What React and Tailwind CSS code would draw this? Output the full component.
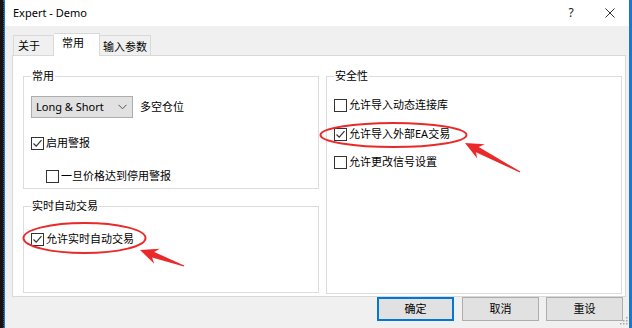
import React from "react";

const font = {
  fontFamily: '"Segoe UI", "Noto Sans", "Noto Sans CJK SC", sans-serif',
};

function Check({ checked, label, className = "" }) {
  return (
    <div className={"flex items-center h-[16px] " + className}>
      <span className="w-[13px] h-[13px] border border-[#333] bg-white flex items-center justify-center shrink-0">
        {checked && (
          <svg width="11" height="11" viewBox="0 0 11 11">
            <path d="M1.5 5.5 L4.2 8.2 L9.5 2.2" fill="none" stroke="#333" strokeWidth="1.2" />
          </svg>
        )}
      </span>
      <span className="ml-[2px] text-[11px] leading-[16px] text-black whitespace-nowrap">{label}</span>
    </div>
  );
}

function Group({ title, className = "", children }) {
  return (
    <fieldset className={"border border-[#dcdcdc] px-[7px] pb-0 m-0 " + className}>
      <legend className="px-[1px] text-[11px] leading-[16px] text-black">{title}</legend>
      {children}
    </fieldset>
  );
}

function Arrow({ tip, tail }) {
  const dx = tail[0] - tip[0];
  const dy = tail[1] - tip[1];
  const len = Math.hypot(dx, dy);
  const ux = dx / len;
  const uy = dy / len;
  const px = -uy;
  const py = ux;
  const at = (d, w) => [tip[0] + ux * d + px * w, tip[1] + uy * d + py * w];
  const pts = [
    tip,
    at(18, 8),
    at(14, 3),
    at(len, 0.6),
    at(len, -0.6),
    at(14, -3),
    at(18, -8),
  ];
  return <polygon points={pts.map((p) => p.join(",")).join(" ")} fill="#ea2a2a" />;
}

export default function App() {
  return (
    <div className="relative w-[632px] h-[328px] flex overflow-hidden bg-[#f0f0f0]" style={font}>
      {/* desktop edge */}
      <div className="w-[4px] bg-[#141414] border-r border-dotted border-[#555]" />
      <div className="w-[1px] bg-[#1b78d0]" />

      <div className="flex-1 flex flex-col">
        {/* title bar */}
        <div className="h-[26px] bg-white flex items-center">
          <span className="pl-[8px] text-[11px] text-black flex-1">Expert - Demo</span>
          <span className="w-[40px] text-center text-[12px] text-[#222]">?</span>
          <span className="w-[38px] flex justify-center">
            <svg width="10" height="10" viewBox="0 0 10 10">
              <path d="M0.5 0.5 L9.5 9.5 M9.5 0.5 L0.5 9.5" stroke="#333" strokeWidth="1" />
            </svg>
          </span>
        </div>

        {/* tabs */}
        <div className="h-[29px] flex items-end pl-[8px]">
          <div className="w-[41px] h-[20px] border border-[#d9d9d9] border-b-0 bg-[#f0f0f0] text-[11px] leading-[20px] pl-[4px] text-black whitespace-nowrap">
            关于
          </div>
          <div className="relative z-10 w-[46px] h-[23px] -mb-px border border-[#d9d9d9] border-b-0 border-l-0 bg-white text-[11px] leading-[18px] pl-[8px] text-black whitespace-nowrap">
            常用
          </div>
          <div className="w-[51px] h-[20px] border border-[#d9d9d9] border-b-0 border-l-0 bg-[#f0f0f0] text-[11px] leading-[22px] pl-[3px] text-black whitespace-nowrap">
            输入参数
          </div>
        </div>

        {/* tab panel */}
        <div className="ml-[7px] w-[614px] h-[242px] border border-[#d9d9d9] bg-white flex pl-[10px] pt-[12px]">
          <div className="w-[296px] flex flex-col">
            <Group title="常用" className="h-[121px]">
              <div className="mt-[12px] flex items-center">
                <div className="w-[102px] h-[22px] bg-[#e1e1e1] border border-[#adadad] flex items-center pl-[4px] pr-[5px]">
                  <span className="flex-1 text-[11px] text-black">Long &amp; Short</span>
                  <svg width="9" height="6" viewBox="0 0 9 6">
                    <path d="M0.5 0.8 L4.5 4.8 L8.5 0.8" fill="none" stroke="#555" strokeWidth="1" />
                  </svg>
                </div>
                <span className="ml-[7px] text-[11px] text-black">多空仓位</span>
              </div>
              <Check checked label="启用警报" className="mt-[17px]" />
              <Check label="一旦价格达到停用警报" className="mt-[17px] ml-[15px]" />
            </Group>
            <Group title="实时自动交易" className="h-[95px] mt-[9px]">
              <Check checked label="允许实时自动交易" className="mt-[17px]" />
            </Group>
          </div>
          <div className="w-[296px] ml-[7px]">
            <Group title="安全性" className="h-[226px]">
              <Check label="允许导入动态连接库" className="mt-[13px]" />
              <Check checked label="允许导入外部EA交易" className="mt-[13px]" />
              <Check label="允许更改信号设置" className="mt-[12px]" />
            </Group>
          </div>
        </div>

        {/* buttons */}
        <div className="flex justify-end pr-[6px]">
          <button className="w-[77px] h-[24px] bg-[#e1e1e1] border border-[#0078d7] shadow-[inset_0_0_0_1px_#0078d7] text-[11px] text-black">
            确定
          </button>
          <button className="ml-[8px] w-[77px] h-[24px] bg-[#e1e1e1] border border-[#adadad] text-[11px] text-black">
            取消
          </button>
          <button className="ml-[7px] w-[77px] h-[24px] bg-[#e1e1e1] border border-[#adadad] text-[11px] text-black">
            重设
          </button>
        </div>
      </div>

      <div className="w-[3px] bg-[#1b78d0]" />

      {/* size grip */}
      <svg className="absolute left-[619px] top-[316px]" width="9" height="9" viewBox="0 0 9 9">
        {[[7, 1], [4, 4], [7, 4], [1, 7], [4, 7], [7, 7]].map(([x, y], i) => (
          <rect key={i} x={x} y={y} width="1.5" height="1.5" fill="#a8a8a8" />
        ))}
      </svg>

      {/* annotations */}
      <svg className="absolute left-0 top-0 pointer-events-none" width="632" height="328">
        <ellipse cx="393.5" cy="135" rx="73" ry="12" fill="none" stroke="#ea2a2a" strokeWidth="2" />
        <ellipse cx="84.5" cy="238" rx="61" ry="15" fill="none" stroke="#ea2a2a" strokeWidth="2" />
        <Arrow tip={[465, 143]} tail={[520, 172]} />
        <Arrow tip={[140, 250]} tail={[184, 266]} />
      </svg>
    </div>
  );
}
